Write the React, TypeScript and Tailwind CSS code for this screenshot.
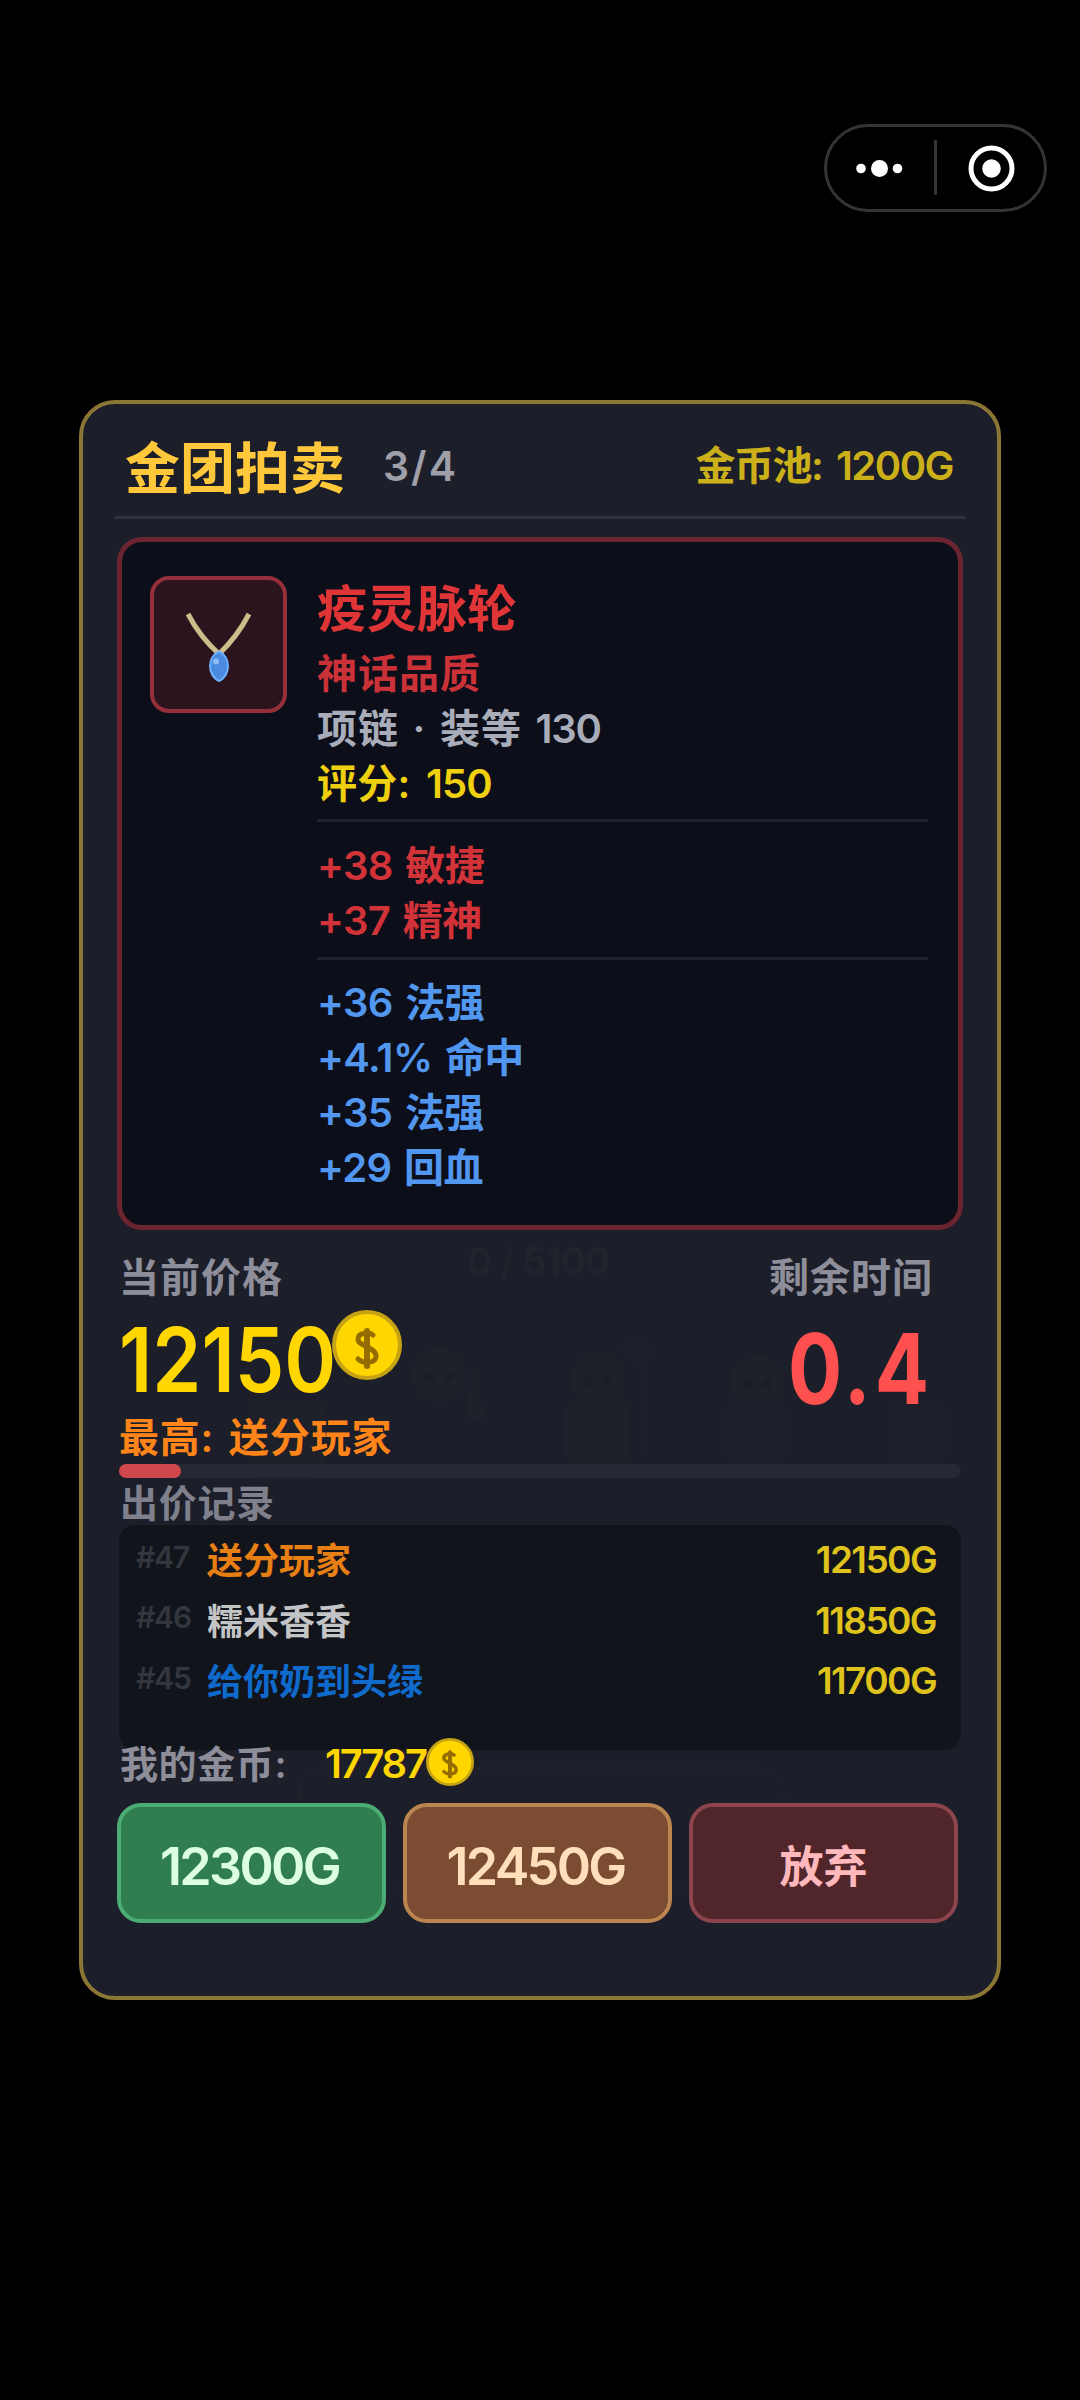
import React from "react";

const bids = [
  { id: "#47", name: "送分玩家", price: "12150G", color: "text-[#e87f14]" },
  { id: "#46", name: "糯米香香", price: "11850G", color: "text-[#c3c4c6]" },
  { id: "#45", name: "给你奶到头绿", price: "11700G", color: "text-[#0f6acb]" },
];

const actions = [
  { label: "12300G", cls: "bg-[#307d50] border-[#4bad74] text-[#dcffe4] text-[52px] pt-2 pr-1 font-semibold tracking-[-2.7px]" },
  { label: "12450G", cls: "bg-[#7b4c32] border-[#bb854f] text-[#ffdfba] text-[52px] pt-2 pr-1 font-semibold tracking-[-2.7px]" },
  { label: "放弃", cls: "bg-[#50262a] border-[#8d454d] text-[#ffb8bc] text-[44px] pt-2 font-bold" },
];

function Coin({ size }: { size: number }) {
  return (
    <svg width={size} height={size} viewBox="0 0 70 70" className="block shrink-0">
      <circle cx="35" cy="35" r="33" fill="#ffd600" stroke="#c6a314" strokeWidth="4" />
      <g fill="none" stroke="#946c00" strokeLinecap="round">
        <path d="M35 21V56" strokeWidth="6" />
        <path d="M41 25C38 22 26 22 26 29.500C26 36 44 37 44 46C44 54 31 54 26 49" strokeWidth="5" />
      </g>
    </svg>
  );
}

function Necklace() {
  return (
    <svg width="128" height="128" viewBox="0 0 128 128" className="block">
      <path d="M33 33Q45 56 64 73Q82 56 94 33" fill="none" stroke="#cdbd8a" strokeWidth="5" />
      <path
        d="M64 70.500C70 73 73 79 73 85C73 91 70 97.500 64 100C58 97.500 55 91 55 85C55 79 58 73 64 70.500Z"
        fill="#4a8be0"
        stroke="#6fb0ff"
        strokeWidth="2"
      />
      <circle cx="61" cy="80.500" r="3" fill="#8cbcf5" />
    </svg>
  );
}

function Capsule() {
  return (
    <div className="ml-[824px] flex h-[88px] w-[223px] items-center rounded-full border-[3px] border-[#343436] bg-black">
      <svg width="217" height="82" viewBox="0 0 217 82">
        <g fill="#fff">
          <circle cx="34" cy="41.500" r="4.800" />
          <circle cx="52.500" cy="41.500" r="8.500" />
          <circle cx="70.500" cy="41.500" r="4.800" />
          <circle cx="164.500" cy="41.500" r="9.300" />
        </g>
        <rect x="107" y="13" width="3" height="55" fill="#343436" />
        <circle cx="164.500" cy="41.500" r="20.500" fill="none" stroke="#fff" strokeWidth="5" />
      </svg>
    </div>
  );
}

/* Game scene that shows faintly through the dialog */
function Party() {
  return (
    <svg width="914" height="700" viewBox="0 0 914 700" className="absolute top-[900px] left-0 -z-10">
      <g fill="#1e202a">
        <rect x="164" y="96" width="78" height="80" rx="8" />
        <circle cx="356" cy="71" r="28" />
        <path d="M392 55L402 115H382Z" />
        <circle cx="515" cy="75" r="28" />
        <rect x="482" y="96" width="64" height="64" rx="8" />
        <circle cx="675" cy="79" r="28" />
      </g>
      <rect x="555" y="60" width="8" height="92" fill="#1d1f2a" />
      <circle cx="554" cy="46" r="17" fill="#1d1f2a" />
      <rect x="642" y="98" width="62" height="62" rx="8" fill="#1c202b" />
      <rect x="805" y="98" width="60" height="62" rx="8" fill="#1d1f2a" />
      <g fill="#1b1d27">
        <circle cx="347" cy="73" r="5" />
        <circle cx="366" cy="73" r="5" />
        <circle cx="505" cy="77" r="5" />
        <circle cx="524" cy="77" r="5" />
        <circle cx="665" cy="80" r="5" />
        <circle cx="684" cy="80" r="5" />
      </g>
      <rect x="217" y="464" width="484" height="120" rx="22" fill="none" stroke="#1e202a" strokeWidth="3" />
    </svg>
  );
}

export default function App() {
  return (
    <div className="h-[2400px] w-[1080px] overflow-hidden bg-[#000001] pt-[124px] font-['Inter','Noto_Sans_CJK_SC',sans-serif] font-semibold whitespace-nowrap">
      <Capsule />
      <main className="relative isolate mt-[188px] ml-[79px] flex h-[1600px] w-[922px] flex-col rounded-[36px] border-4 border-[#8b7636] bg-[#1c1e29]">
        <Party />
        <span className="absolute top-[837px] left-[384px] -z-10 text-[38px] leading-10 tracking-[-0.8px] text-[#21232d]">0 / 5100</span>
        <header className="mr-[44px] ml-[42px] flex h-[112px] items-center pt-4">
          <h1 className="text-[55px] leading-none font-bold text-[#ffc83a]">金团拍卖</h1>
          <span className="mb-1 ml-[38px] text-[41px] leading-none tracking-[2px] text-[#9f9faa]">3/4</span>
          <span className="mb-1 ml-auto text-[40px] leading-none tracking-[-1.5px] text-[#ccb01a] [word-spacing:5px]">金币池: 1200G</span>
        </header>
        <div className="mx-[31px] h-[3px] shrink-0 bg-[#2f313c]" />

        <section className="mt-[18px] ml-[34px] flex h-[693px] w-[846px] shrink-0 gap-[30px] rounded-[25px] border-[5px] border-[#6b2430] bg-[#0c0e19] pt-[34px] pl-7">
          <div className="flex h-[137px] w-[137px] items-center justify-center rounded-[19px] border-[4.5px] border-[#95303a] bg-[#2b141d]">
            <Necklace />
          </div>
          <div className="w-[611px] pt-[2px] text-[40px] leading-[55px]">
            <h2 className="h-[68px] text-[50px] leading-[62px] font-bold text-[#e03536]">疫灵脉轮</h2>
            <p className="tracking-[1px] text-[#cb3238]">神话品质</p>
            <p className="text-[#a9adba] [word-spacing:2.5px]">
              <span className="tracking-[1px]">项链 · 装等 </span>
              <span className="tracking-[-1.2px]">130</span>
            </p>
            <p className="text-[#eed00f] [word-spacing:5px]">
              <span className="tracking-[0.3px]">评分: </span>
              <span className="tracking-[-0.9px]">150</span>
            </p>
            <div className="mt-2 h-[3px] bg-[#20232d]" />
            <div className="mt-4 tracking-[-0.6px] text-[#d13338] [word-spacing:3px]">
              <p>+38 敏捷</p>
              <p>+37 精神</p>
            </div>
            <div className="mt-[9px] h-[3px] bg-[#20232d]" />
            <div className="mt-[15px] tracking-[-0.6px] text-[#5297ef] [word-spacing:3px]">
              <p>+36 法强</p>
              <p>+4.1% 命中</p>
              <p>+35 法强</p>
              <p>+29 回血</p>
            </div>
          </div>
        </section>

        <section className="mr-[64px] ml-[36px] flex h-[234px] shrink-0 justify-between pt-7">
          <div>
            <p className="text-[40px] leading-10 tracking-[1px] text-[#8d8e9a]">当前价格</p>
            <div className="mt-4 flex h-[90px]">
              <span className="w-[213px] origin-left scale-x-[0.885] text-[89px] leading-[92px] text-[#ffd600]">12150</span>
              <div className="-mt-1">
                <Coin size={70} />
              </div>
            </div>
            <p className="mt-[14px] text-[40px] leading-10 tracking-[0.8px] text-[#ff8419] [word-spacing:4px]">最高: 送分玩家</p>
          </div>
          <div className="text-right">
            <p className="text-[40px] leading-10 tracking-[1px] text-[#8d8e9a]">剩余时间</p>
            <p className="mt-5 origin-right scale-x-[0.82] text-[98px] leading-[101px] font-bold tracking-[5px] text-[#ff5050]">0.4</p>
          </div>
        </section>

        <div className="ml-[36px] h-[14px] w-[842px] shrink-0 rounded-full bg-[#262833]">
          <div className="h-full w-[62px] rounded-full bg-[#d0484c]" />
        </div>
        <p className="mt-[5px] ml-[37px] text-[38px] leading-10 tracking-[0.7px] text-[#7f808c]">出价记录</p>
        <ul className="mt-[2px] ml-[36px] h-[225px] w-[842px] shrink-0 rounded-2xl bg-[#11141b] pt-[5px] pr-[25px] pl-[17px]">
          {bids.map((b) => (
            <li key={b.id} className="flex h-[60.5px] items-center">
              <span className="mb-[7px] w-[71px] text-[30px] leading-none tracking-[-1.2px] text-[#34363d]">{b.id}</span>
              <span className={`mt-[2px] text-[36px] leading-[60px] ${b.color}`}>{b.name}</span>
              <span className="ml-auto text-[37px] leading-[60px] tracking-[-1.6px] text-[#dfc31c]">{b.price}</span>
            </li>
          ))}
        </ul>
        <div className="mt-[-10px] ml-[37px] flex h-[48px] shrink-0 items-center">
          <span className="w-[205px] text-[38px] tracking-[0.6px] text-[#8d8e9a]">我的金币:</span>
          <span className="w-[101px] text-[40px] tracking-[-2.2px] text-[#ffd600]">17787</span>
          <div className="-mt-[5px]">
            <Coin size={48} />
          </div>
        </div>
        <div className="mt-[15px] ml-[34px] flex gap-[17px]">
          {actions.map((a) => (
            <button key={a.label} className={`h-[120px] w-[269px] rounded-[24px] border-4 ${a.cls}`}>
              {a.label}
            </button>
          ))}
        </div>
      </main>
    </div>
  );
}
